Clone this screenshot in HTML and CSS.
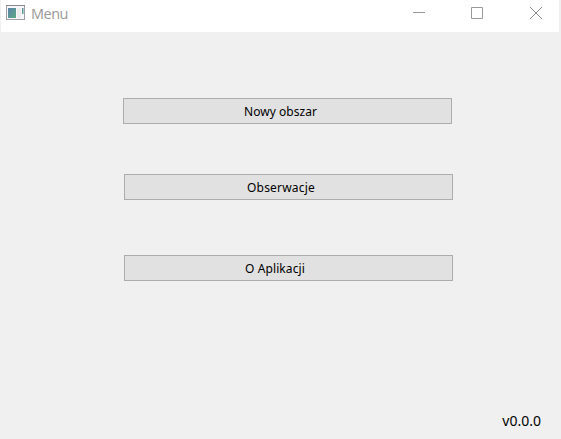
FILE: index.html
```html
<!DOCTYPE html>
<html lang="pl">
<head>
<meta charset="utf-8">
<title>Menu</title>
<link rel="stylesheet" href="styles.css">
</head>
<body>
<div class="window">
  <header class="titlebar">
    <svg class="app-icon" width="19" height="15" viewBox="0 0 19 15">
      <defs><linearGradient id="pane" x1="0" y1="0" x2="1" y2="1"><stop offset="0" stop-color="#5b83ac"/><stop offset="1" stop-color="#5aab83"/></linearGradient></defs>
      <rect x=".5" y=".5" width="18" height="14" fill="#f8f8f8" stroke="#9b9fa3"/>
      <path d="M0 .5h19" stroke="#85898e"/>
      <rect x="2" y="3" width="8" height="10" fill="url(#pane)"/>
      <rect x="11" y="3" width="4" height="10" fill="#ececec"/>
      <rect x="16" y="3" width="1.5" height="6" fill="url(#pane)"/>
    </svg>
    <h1 class="title">Menu</h1>
    <div class="controls">
      <svg class="minimize" width="12" height="12" viewBox="0 0 12 12"><path d="M0 5.5h12" stroke="#999"/></svg>
      <svg class="maximize" width="12" height="12" viewBox="0 0 12 12"><path d="M.5.5h11v11H.5z" fill="none" stroke="#999"/></svg>
      <svg class="close" width="12" height="12" viewBox="0 0 12 12"><path d="M0 0l12 12M12 0L0 12" stroke="#8c8c8c"/></svg>
    </div>
  </header>
  <main class="menu">
    <button class="item new-area"><span>Nowy obszar</span></button>
    <button class="item observations"><span>Obserwacje</span></button>
    <button class="item about"><span>O Aplikacji</span></button>
  </main>
  <footer class="version">v0.0.0</footer>
</div>
</body>
</html>
```
FILE: styles.css
```css
* { box-sizing: border-box; }
body { margin: 0; background: #f0f0f0; }
.window {
  display: flex;
  flex-direction: column;
  height: 439px;
  width: 561px;
  overflow: hidden;
}
.titlebar {
  display: flex;
  align-items: flex-start;
  height: 32px;
  flex: none;
  margin: 0 2px 0 1px;
  padding-left: 5px;
  background: #fff;
}
.app-icon { margin-top: 5px; }
.title {
  margin: 4px 0 0 6px;
  font: 400 14.5px/20px "Open Sans", "Noto Sans", sans-serif;
  letter-spacing: -0.5px;
  color: #999;
}
.controls {
  display: flex;
  margin: 7px 17px 0 auto;
}
.controls svg { display: block; }
.minimize { margin-right: 46px; }
.maximize { margin-right: 47px; }
.menu {
  display: flex;
  flex-direction: column;
  flex: 1;
  padding: 66px 0 0 124px;
}
.item {
  display: block;
  flex: none;
  width: 329px;
  height: 26px;
  padding: 2px 0 0;
  border: 1px solid #adadad;
  border-radius: 0;
  background: #e1e1e1;
  color: #000;
  font: 400 12px/22px "Noto Sans", sans-serif;
  letter-spacing: 0.1px;
  text-align: left;
}
.new-area { margin-left: -1px; padding-left: 120px; letter-spacing: 0.05px; }
.observations { margin-top: 50px; padding-left: 122px; letter-spacing: 0.2px; }
.about { margin-top: 55px; padding-left: 120px; }
.version {
  flex: none;
  padding: 0 20px 8px 0;
  text-align: right;
  color: #000;
  font: 400 14px/20px "Noto Sans", sans-serif;
}
```
